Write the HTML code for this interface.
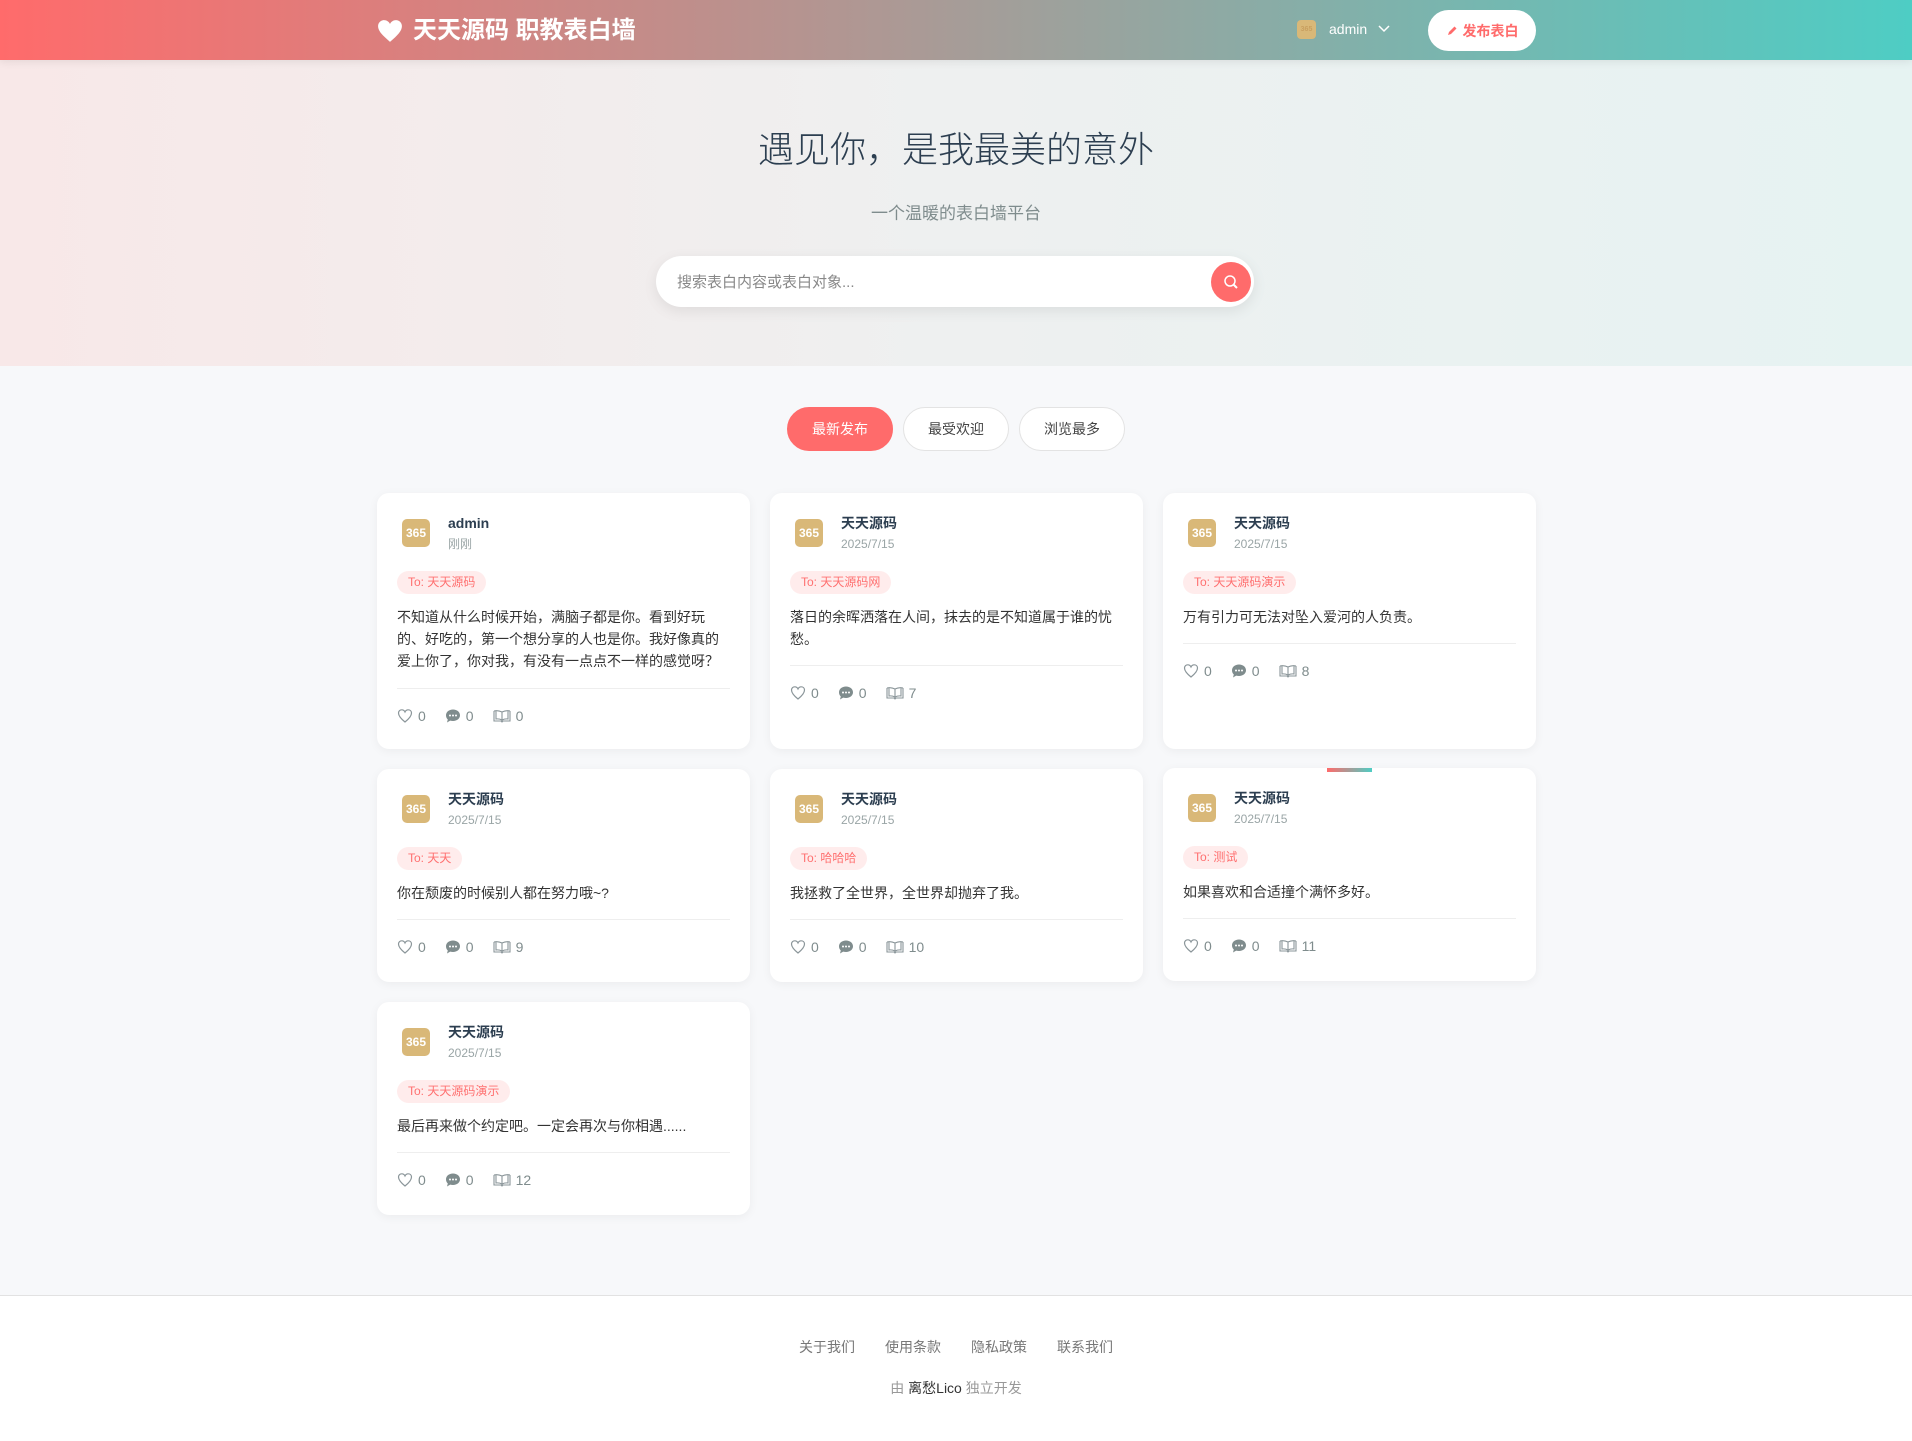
<!DOCTYPE html>
<html><head><meta charset="utf-8"><style>
*{box-sizing:border-box;margin:0;padding:0}
body{width:1912px;height:1441px;background:#f7f8fa;font-family:"Liberation Sans","Noto Sans CJK SC",sans-serif;color:#333;position:relative;overflow:hidden}
.hdr{position:absolute;left:0;top:0;width:1912px;height:60px;background:linear-gradient(90deg,#ff6b6b,#4ecdc4);box-shadow:0 2px 8px rgba(0,0,0,.08);z-index:2}
.logo{position:absolute;left:377px;top:14px;color:#fff;font-size:24px;font-weight:bold;display:flex;align-items:center;gap:10px;line-height:34px}
.uav{position:absolute;left:1297px;top:20px;width:19px;height:19px;border-radius:4px;background:#d9b878;color:#c9a060;font-size:7px;text-align:center;line-height:19px;font-weight:bold}
.uname{position:absolute;left:1329px;top:20px;color:#fff;font-size:14px;line-height:19px}
.chev{position:absolute;left:1377px;top:22px}
.pub{position:absolute;left:1428px;top:10px;width:108px;height:41px;border-radius:21px;background:#fff;color:#ff6b6b;font-size:14px;font-weight:bold;display:flex;align-items:center;justify-content:center;gap:5px}
.hero{position:absolute;left:0;top:60px;width:1912px;height:306px;background:linear-gradient(90deg,#f8e8e8,#eef0f0 50%,#e6f3f2)}
.h1{position:absolute;left:0;width:1912px;text-align:center;font-size:36px;color:#2c3e50;line-height:50px;font-weight:300}
.sub{position:absolute;left:0;width:1912px;text-align:center;font-size:17px;color:#7f8c8d;line-height:24px}
.search{position:absolute;left:656px;top:256px;width:598px;height:51px;border-radius:26px;background:#fff;box-shadow:0 4px 14px rgba(0,0,0,.08)}
.search span{position:absolute;left:21px;top:17px;font-size:15px;color:#888;line-height:20px}
.sbtn{position:absolute;left:555px;top:6px;width:40px;height:40px;border-radius:50%;background:#ff6b6b}
.tab{position:absolute;top:407px;height:44px;width:106px;border-radius:22px;background:#fff;border:1px solid #e3e3e3;font-size:14px;color:#444;text-align:center;line-height:42px}
.tab.on{background:#ff6b6b;border-color:#ff6b6b;color:#fff}
.card{position:absolute;width:373px;background:#fff;border-radius:12px;box-shadow:0 2px 10px rgba(0,0,0,.05);padding:24px 20px 0}
.av{position:absolute;left:25px;top:26px;width:28px;height:28px;border-radius:5px;background:#d9b878;color:#fff;font-size:12px;font-weight:bold;text-align:center;line-height:28px}
.nm{position:absolute;left:71px;top:20px;font-size:14px;font-weight:bold;color:#2c3e50;line-height:20px}
.dt{position:absolute;left:71px;top:42px;font-size:12px;color:#9aa5a6;line-height:18px}
.tag{position:absolute;left:20px;top:78px;height:23px;padding:0 11px;border-radius:12px;background:#ffecec;color:#ff7070;font-size:12px;line-height:23px}
.txt{position:absolute;left:20px;right:20px;top:113px;font-size:14px;line-height:22px;color:#333}
.div{position:absolute;left:20px;right:20px;height:1px;background:#eee}
.st{position:absolute;left:20px;display:flex;align-items:center;font-size:14px;color:#7f8c8d;line-height:20px}
.st svg{margin-right:5px}
.st .g{margin-right:19px;display:flex;align-items:center}
.ft{position:absolute;left:0;top:1295px;width:1912px;height:146px;background:#fff;border-top:1px solid #e2e2e2}
.links{position:absolute;top:41px;left:0;width:1912px;text-align:center;font-size:14px;color:#777}
.links span{margin:0 15px}
.cr{position:absolute;top:82px;left:0;width:1912px;text-align:center;font-size:14px;color:#999}
</style></head><body>
<div class="hdr">
 <div class="logo"><svg width="26" height="24" viewBox="0 0 24 22"><path d="M12 21 C5 15 1 11 1 6.5 1 3.5 3.5 1 6.5 1 9 1 11 2.5 12 4.5 13 2.5 15 1 17.5 1 20.5 1 23 3.5 23 6.5 23 11 19 15 12 21Z" fill="#fff"/></svg><span>天天源码 职教表白墙</span></div>
 <div class="uav">365</div><div class="uname">admin</div>
 <svg class="chev" width="14" height="14" viewBox="0 0 14 14"><path d="M2 4 L7 9 L12 4" stroke="#fff" stroke-width="1.5" fill="none"/></svg>
 <div class="pub"><svg width="12" height="12" viewBox="0 0 12 12"><path d="M2 10 L3 7 L8.5 1.5 L10.5 3.5 L5 9Z" fill="#ff6b6b"/></svg>发布表白</div>
</div>
<div class="hero">
 <div class="h1" style="top:65px">遇见你，是我最美的意外</div>
 <div class="sub" style="top:142px">一个温暖的表白墙平台</div>
 <div class="search" style="top:196px"><span>搜索表白内容或表白对象...</span><div class="sbtn"><svg width="40" height="40" viewBox="0 0 40 40"><circle cx="19" cy="19" r="5" stroke="#fff" stroke-width="1.5" fill="none"/><path d="M22.5 22.5 L26 26" stroke="#fff" stroke-width="2"/></svg></div></div>
</div>
<div class="tab on" style="left:787px">最新发布</div>
<div class="tab" style="left:903px">最受欢迎</div>
<div class="tab" style="left:1019px">浏览最多</div>

<svg width="0" height="0" style="position:absolute"><defs>
<symbol id="h" viewBox="0 0 16 16"><path d="M8 14 C3 10 1.5 7.5 1.5 5 1.5 3 3 1.8 4.8 1.8 6.3 1.8 7.4 2.7 8 4 8.6 2.7 9.7 1.8 11.2 1.8 13 1.8 14.5 3 14.5 5 14.5 7.5 13 10 8 14Z" fill="none" stroke="#8a9599" stroke-width="1.2"/></symbol>
<symbol id="c" viewBox="0 0 16 16"><path d="M8 1.5 C12 1.5 15 4 15 7.3 15 10.6 12 13 8 13 7 13 6 12.9 5.2 12.6 L2 14.5 2.8 11.5 C1.6 10.4 1 9 1 7.3 1 4 4 1.5 8 1.5Z" fill="#7f8c8d"/><circle cx="5" cy="7.5" r="1" fill="#fff"/><circle cx="8" cy="7.5" r="1" fill="#fff"/><circle cx="11" cy="7.5" r="1" fill="#fff"/></symbol>
<symbol id="b" viewBox="0 0 18 16"><path d="M1 3 L1 13 L8 13 L9 14 L10 13 L17 13 L17 3 M1 3 Q5 2 9 4 Q13 2 17 3 M9 4 L9 13 M3 3 L3 11 Q6 10.5 9 12 Q12 10.5 15 11 L15 3" fill="none" stroke="#8a9599" stroke-width="1.1"/></symbol>
</defs></svg>

<div class="card" style="left:377px;top:493px;height:256px">
 <div class="av">365</div><div class="nm">admin</div><div class="dt">刚刚</div>
 <div class="tag">To: 天天源码</div>
 <div class="txt">不知道从什么时候开始，满脑子都是你。看到好玩的、好吃的，第一个想分享的人也是你。我好像真的爱上你了，你对我，有没有一点点不一样的感觉呀？</div>
 <div class="div" style="top:195px"></div>
 <div class="st" style="top:213px"><span class="g"><svg width="16" height="16"><use href="#h"/></svg>0</span><span class="g"><svg width="16" height="16"><use href="#c"/></svg>0</span><span class="g"><svg width="18" height="16"><use href="#b"/></svg>0</span></div>
</div>
<div class="card" style="left:770px;top:493px;height:256px">
 <div class="av">365</div><div class="nm">天天源码</div><div class="dt">2025/7/15</div>
 <div class="tag">To: 天天源码网</div>
 <div class="txt">落日的余晖洒落在人间，抹去的是不知道属于谁的忧愁。</div>
 <div class="div" style="top:172px"></div>
 <div class="st" style="top:190px"><span class="g"><svg width="16" height="16"><use href="#h"/></svg>0</span><span class="g"><svg width="16" height="16"><use href="#c"/></svg>0</span><span class="g"><svg width="18" height="16"><use href="#b"/></svg>7</span></div>
</div>
<div class="card" style="left:1163px;top:493px;height:256px">
 <div class="av">365</div><div class="nm">天天源码</div><div class="dt">2025/7/15</div>
 <div class="tag">To: 天天源码演示</div>
 <div class="txt">万有引力可无法对坠入爱河的人负责。</div>
 <div class="div" style="top:150px"></div>
 <div class="st" style="top:168px"><span class="g"><svg width="16" height="16"><use href="#h"/></svg>0</span><span class="g"><svg width="16" height="16"><use href="#c"/></svg>0</span><span class="g"><svg width="18" height="16"><use href="#b"/></svg>8</span></div>
</div>

<div class="card" style="left:377px;top:769px;height:213px">
 <div class="av">365</div><div class="nm">天天源码</div><div class="dt">2025/7/15</div>
 <div class="tag">To: 天天</div>
 <div class="txt">你在颓废的时候别人都在努力哦~?</div>
 <div class="div" style="top:150px"></div>
 <div class="st" style="top:168px"><span class="g"><svg width="16" height="16"><use href="#h"/></svg>0</span><span class="g"><svg width="16" height="16"><use href="#c"/></svg>0</span><span class="g"><svg width="18" height="16"><use href="#b"/></svg>9</span></div>
</div>
<div class="card" style="left:770px;top:769px;height:213px">
 <div class="av">365</div><div class="nm">天天源码</div><div class="dt">2025/7/15</div>
 <div class="tag">To: 哈哈哈</div>
 <div class="txt">我拯救了全世界，全世界却抛弃了我。</div>
 <div class="div" style="top:150px"></div>
 <div class="st" style="top:168px"><span class="g"><svg width="16" height="16"><use href="#h"/></svg>0</span><span class="g"><svg width="16" height="16"><use href="#c"/></svg>0</span><span class="g"><svg width="18" height="16"><use href="#b"/></svg>10</span></div>
</div>
<div class="card" style="left:1163px;top:768px;height:213px">
 <div style="position:absolute;left:164px;top:0;width:45px;height:4px;background:linear-gradient(90deg,#ff6b6b,#4ecdc4)"></div>
 <div class="av">365</div><div class="nm">天天源码</div><div class="dt">2025/7/15</div>
 <div class="tag">To: 测试</div>
 <div class="txt">如果喜欢和合适撞个满怀多好。</div>
 <div class="div" style="top:150px"></div>
 <div class="st" style="top:168px"><span class="g"><svg width="16" height="16"><use href="#h"/></svg>0</span><span class="g"><svg width="16" height="16"><use href="#c"/></svg>0</span><span class="g"><svg width="18" height="16"><use href="#b"/></svg>11</span></div>
</div>

<div class="card" style="left:377px;top:1002px;height:213px">
 <div class="av">365</div><div class="nm">天天源码</div><div class="dt">2025/7/15</div>
 <div class="tag">To: 天天源码演示</div>
 <div class="txt">最后再来做个约定吧。一定会再次与你相遇......</div>
 <div class="div" style="top:150px"></div>
 <div class="st" style="top:168px"><span class="g"><svg width="16" height="16"><use href="#h"/></svg>0</span><span class="g"><svg width="16" height="16"><use href="#c"/></svg>0</span><span class="g"><svg width="18" height="16"><use href="#b"/></svg>12</span></div>
</div>

<div class="ft">
 <div class="links"><span>关于我们</span><span>使用条款</span><span>隐私政策</span><span>联系我们</span></div>
 <div class="cr">由 <span style="color:#333">离愁Lico</span> 独立开发</div>
</div>
</body></html>
